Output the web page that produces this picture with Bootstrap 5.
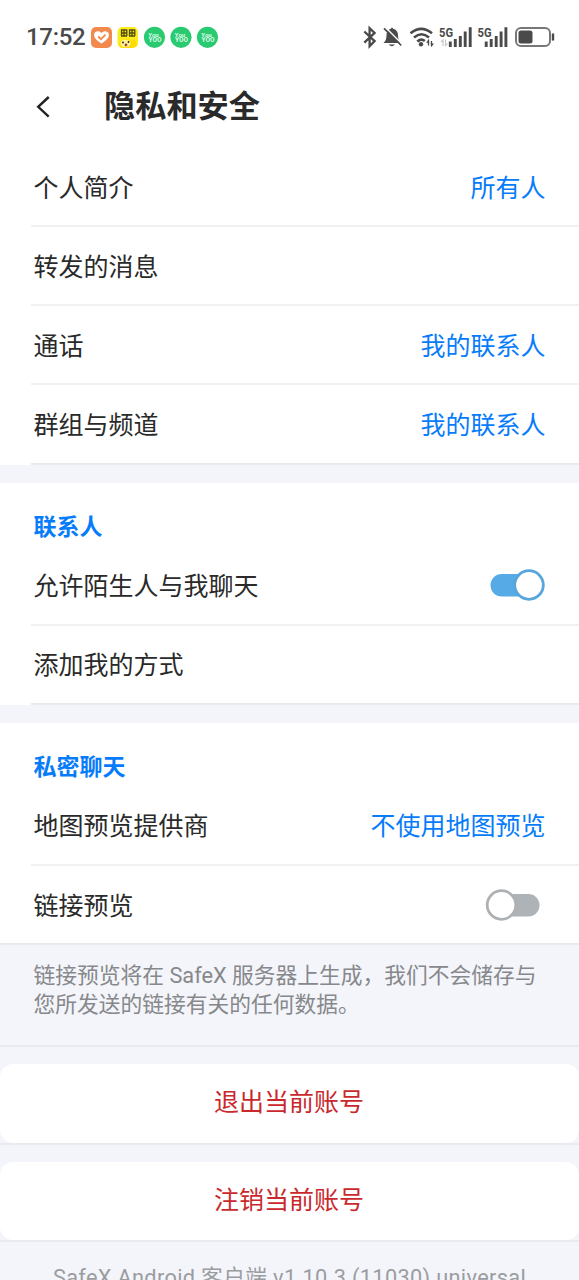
<!DOCTYPE html>
<html lang="zh-CN">
<head>
<meta charset="utf-8">
<meta name="viewport" content="width=device-width, initial-scale=1">
<title>隐私和安全</title>
<link href="https://cdn.jsdelivr.net/npm/bootstrap@5.3.0/dist/css/bootstrap.min.css" rel="stylesheet">
<style>
  html, body { height: 1280px; overflow: hidden; }
  body { background: #f3f5fa; color: #2a2a2a; font-family: Roboto, "Noto Sans CJK SC", sans-serif; font-size: 25px; }
  .status-bar { height: 74px; padding: 0 24px 0 26px; color: #4a4a4a; }
  .clock { font-size: 24px; font-weight: 500; width: 64px; letter-spacing: -.3px; line-height: 30px; }
  .status-icons { display: block; }
  .title-bar { height: 73.8px; padding: 0 0 8px 33.5px; }
  .title-bar h1 { font-size: 31.2px; font-weight: 700; line-height: 40px; margin-left: 52.5px; }
  .setting { height: 79.2px; padding: 4.6px 33.5px 0 2.5px; margin-left: 31px; line-height: 36px; border-bottom: 2px solid #f1f1f2; }
  .setting:last-child { border-bottom-color: #e9eaed; }
  .setting.ends-block { margin-left: 0; padding-left: 33.5px; }
  .setting-value { color: #077cfa; }
  .toggle { margin: 0 .5px 4px 0; }
  .block-gap { height: 18.6px; }
  .section-title { height: 63.2px; padding: 26.8px 33.5px 0; font-size: 23px; font-weight: 700; line-height: 36px; color: #077cfa; }
  .note { height: 101.7px; padding: 17.2px 33.5px 0; font-size: 21.75px; line-height: 28.5px; color: #87888b; border-bottom: 2px solid #e9eaed; }
  .account-gap { height: 17.6px; }
  .account-gap.between { height: 16.7px; }
  .under-line { border-bottom: 2px solid #e8eaed; }
  .account-btn { height: 78.7px; border: 0; border-radius: 13px; background: #fff; color: #c9292d; font-size: 25px; line-height: 36px; padding: 0 1px 0 0; }
  .version { padding-top: 18px; font-size: 21.75px; line-height: 36px; letter-spacing: .33px; color: #9b9ca0; }
</style>
</head>
<body>
<div class="bg-white">
  <header>
    <div class="status-bar d-flex align-items-center justify-content-between">
      <div class="d-flex align-items-center">
        <span class="clock">17:52</span>
        <svg class="status-icons" width="130" height="24" viewBox="90 25 130 24" aria-hidden="true">
          <rect x="91" y="27" width="21" height="21" rx="5" fill="#f28a4e"/>
          <path d="M101.500 43.500 C96 40 93.500 37 94.200 34 C95 30.800 99.200 30.300 101.500 33 C103.800 30.300 108 30.800 108.800 34 C109.500 37 107 40 101.500 43.500Z" fill="#fff"/>
          <path d="M98.200 36.500l2.700 2.700 4.600-4.600" fill="none" stroke="#f28a4e" stroke-width="1.800"/>
          <rect x="117.500" y="27" width="20.500" height="21" rx="5" fill="#fbec1b"/>
          <path d="M121 30h6M121 33h6M121 36h6M121.500 29.500v6.500M124 29.500v6.500M126.800 29.500v6.500M129 30h6M129 33h6M129 36h6M129.500 29.500v6.500M132 29.500v6.500M134.800 29.500v6.500" stroke="#514b14" stroke-width="1.300"/>
          <path d="M119 44q2-4 5-4l3-1 5 2 1-2 3 2 1 4-4 3h-12z" fill="#ffdc00"/>
          <ellipse cx="125.500" cy="43.500" rx="5" ry="3.800" fill="#fff3a0"/>
          <circle cx="123" cy="42.500" r=".9" fill="#222"/><circle cx="128.500" cy="42" r=".9" fill="#222"/><circle cx="126" cy="45" r="1.400" fill="#a8471f"/>
          <g font-family="Roboto, sans-serif" font-weight="700" fill="#dffbea" text-anchor="middle">
            <circle cx="154.500" cy="37.300" r="10.600" fill="#29ca70"/><text x="153.500" y="36.500" font-size="6">You</text><text x="155" y="42" font-size="6.500">YOO</text>
            <circle cx="181" cy="37.300" r="10.600" fill="#29ca70"/><text x="180" y="36.500" font-size="6">You</text><text x="181.500" y="42" font-size="6.500">YOO</text>
            <circle cx="207.500" cy="37.300" r="10.600" fill="#29ca70"/><text x="206.500" y="36.500" font-size="6">You</text><text x="208" y="42" font-size="6.500">YOO</text>
          </g>
        </svg>
      </div>
      <svg class="status-icons" width="195" height="24" viewBox="360 25 195 24" fill="none" stroke="#4a4a4a" aria-hidden="true">
        <path d="M364.300 31.500l10.300 9.600-5 5V28.200l5 4.700-10.300 9.800" stroke-width="2.300"/>
        <path d="M383.500 43q3-2.500 3-7.500 0-6 4.500-6.800 1-2.200 2 0 5 1 5 6.800 0 5 3 7.500z" fill="#4a4a4a" stroke="none"/>
        <path d="M388.500 44.500h6.500q-3 3.500-6.500 0z" fill="#4a4a4a" stroke="none"/>
        <path d="M385.500 27.500l16.500 16.500" stroke="#fff" stroke-width="1.600"/>
        <path d="M384 28.300l17.300 17.200" stroke-width="1.700"/>
        <path d="M410.500 33.300q10.700-9 21.500 0M414 37.500q7.500-6.500 15 0M417.300 41.500q4-3.500 7.500-.5" stroke-width="2.600"/>
        <circle cx="421" cy="44.200" r="2.200" fill="#4a4a4a" stroke="none"/>
        <path d="M428.500 39.500v6M431.500 41v5.500" stroke-width="1.300"/>
        <path d="M426 42.700l2.500-3 .8 3zM434 43.500l-2.500 3.200-.8-3.200z" fill="#4a4a4a" stroke="none"/>
        <g fill="#4a4a4a" stroke="none" font-family="Roboto, sans-serif" font-weight="700" font-size="13">
          <text x="439" y="37" textLength="14" lengthAdjust="spacingAndGlyphs">5G</text>
          <text x="477.500" y="37" textLength="14" lengthAdjust="spacingAndGlyphs">5G</text>
        </g>
        <path d="M441 42l2-2v6M447.500 43.500l-2 2v-6" stroke="#c9c9c9" stroke-width="1.200"/>
        <path d="M450.300 47v-5.500M455.300 47v-8M460.300 47V36M465.200 47V31.500M470.200 47V27.200M486.200 47v-5.500M491.200 47v-8M496.200 47V36M501.100 47V31.500M505.900 47V27.200" stroke-width="2.900"/>
        <rect x="516" y="28" width="34" height="18" rx="5" stroke="#777" stroke-width="2"/>
        <rect x="518.500" y="30.500" width="14" height="13" rx="2.500" fill="#4a4a4a" stroke="none"/>
        <path d="M553 34.500v5" stroke-width="2.400" stroke-linecap="round"/>
      </svg>
    </div>
    <div class="title-bar d-flex align-items-center">
      <svg width="18" height="26" viewBox="34 94 18 26" fill="none" stroke="#222" stroke-width="2.400" aria-label="返回"><path d="M48.700 97L38.200 106.800l10.500 9.800"/></svg>
      <h1 class="mb-0">隐私和安全</h1>
    </div>
  </header>

  <section>
    <div class="setting d-flex align-items-center justify-content-between"><span>个人简介</span><span class="setting-value">所有人</span></div>
    <div class="setting d-flex align-items-center justify-content-between"><span>转发的消息</span></div>
    <div class="setting d-flex align-items-center justify-content-between"><span>通话</span><span class="setting-value">我的联系人</span></div>
    <div class="setting d-flex align-items-center justify-content-between"><span>群组与频道</span><span class="setting-value">我的联系人</span></div>
  </section>
</div>
<div class="block-gap"></div>

<section class="bg-white">
  <h2 class="section-title mb-0">联系人</h2>
  <div class="setting d-flex align-items-center justify-content-between">
    <span>允许陌生人与我聊天</span>
    <svg class="toggle" width="56" height="34" viewBox="0 0 56 34" role="img" aria-label="开"><rect x="1.500" y="6" width="44" height="22.500" rx="11.250" fill="#56abe6"/><circle cx="40" cy="17" r="14.300" fill="#fff" stroke="#56a5dc" stroke-width="2.800"/></svg>
  </div>
  <div class="setting d-flex align-items-center justify-content-between"><span>添加我的方式</span></div>
</section>
<div class="block-gap"></div>

<section class="bg-white">
  <h2 class="section-title mb-0">私密聊天</h2>
  <div class="setting d-flex align-items-center justify-content-between"><span>地图预览提供商</span><span class="setting-value">不使用地图预览</span></div>
  <div class="setting ends-block d-flex align-items-center justify-content-between">
    <span>链接预览</span>
    <svg class="toggle" width="60" height="34" viewBox="0 0 60 34" role="img" aria-label="关"><rect x="16" y="6" width="38.500" height="22.500" rx="11.250" fill="#aeb3b7"/><circle cx="16.500" cy="17" r="14.300" fill="#fff" stroke="#aeb1b4" stroke-width="2.800"/></svg>
  </div>
</section>
<p class="note mb-0">链接预览将在 SafeX 服务器上生成，我们不会储存与您所发送的链接有关的任何数据。</p>
<div class="account-gap"></div>
<div class="under-line"><button class="account-btn w-100 d-block" type="button">退出当前账号</button></div>
<div class="account-gap between"></div>
<div class="under-line"><button class="account-btn w-100 d-block" type="button">注销当前账号</button></div>
<footer class="version text-center text-nowrap">SafeX Android 客户端 v1.10.3 (11030) universal</footer>
<script src="https://cdn.jsdelivr.net/npm/bootstrap@5.3.0/dist/js/bootstrap.bundle.min.js"></script>
</body>
</html>
